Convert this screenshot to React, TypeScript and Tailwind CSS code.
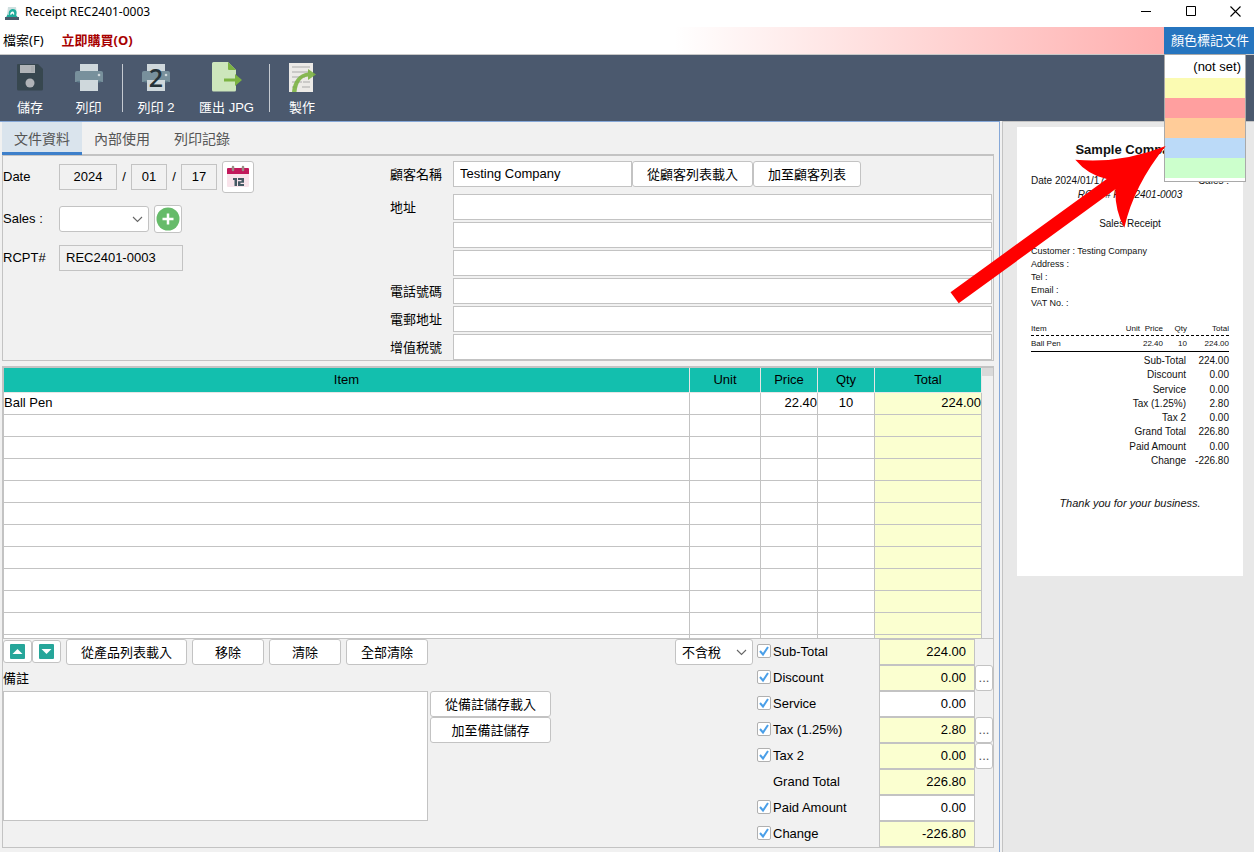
import type { ReactNode } from 'react';
import clsx from 'clsx';

const BORDER = 'border-[#c3c3c3]';

const totals = [
  { label: 'Sub-Total', value: '224.00', check: true, white: false, more: false },
  { label: 'Discount', value: '0.00', check: true, white: false, more: true },
  { label: 'Service', value: '0.00', check: true, white: true, more: false },
  { label: 'Tax (1.25%)', value: '2.80', check: true, white: false, more: true },
  { label: 'Tax 2', value: '0.00', check: true, white: false, more: true },
  { label: 'Grand Total', value: '226.80', check: false, white: false, more: false },
  { label: 'Paid Amount', value: '0.00', check: true, white: true, more: false },
  { label: 'Change', value: '-226.80', check: true, white: false, more: false },
];

const columns = [
  { name: 'Item', width: '' },
  { name: 'Unit', width: 'w-[71px]' },
  { name: 'Price', width: 'w-[57px]' },
  { name: 'Qty', width: 'w-[57px]' },
  { name: 'Total', width: 'w-[107px]' },
];

const rows = [['Ball Pen', '', '22.40', '10', '224.00'], ...Array.from({ length: 11 }, () => ['', '', '', '', ''])];

const colours = [
  { name: 'Yellow', bg: 'bg-[#fbfbb2]' },
  { name: 'Red', bg: 'bg-[#ff9f9f]' },
  { name: 'Orange', bg: 'bg-[#ffcc99]' },
  { name: 'Blue', bg: 'bg-[#bbdaf8]' },
  { name: 'Green', bg: 'bg-[#ccffcc]' },
];

function Button({ children, className, label }: { children: ReactNode; className?: string; label?: string }) {
  return (
    <button
      type="button"
      aria-label={label}
      className={clsx('flex shrink-0 items-center justify-center rounded-[3px] border bg-white', BORDER, className)}
    >
      {children}
    </button>
  );
}

function TextButton({ children, className }: { children: ReactNode; className: string }) {
  return <Button className={clsx('h-[26px] pt-0.5', className)}>{children}</Button>;
}

function Field({ label, value = '', className }: { label: string; value?: string; className?: string }) {
  return (
    <input
      aria-label={label}
      defaultValue={value}
      className={clsx('h-[26px] min-w-0 border pb-0.5 outline-none', BORDER, className)}
    />
  );
}

function Select({ label, options, className }: { label: string; options: string[]; className?: string }) {
  return (
    <div className={clsx('relative h-[26px]', className)}>
      <select
        id={label}
        aria-label={label}
        className={clsx('h-full w-full appearance-none rounded-[3px] border bg-white pt-0.5 pl-1.5 outline-none', BORDER)}
      >
        {options.map((o) => (
          <option key={o}>{o}</option>
        ))}
      </select>
      <svg className="pointer-events-none absolute top-2.5 right-1.5" width="11" height="7" viewBox="0 0 11 7" fill="none">
        <path d="M1 1l4.5 4.5L10 1" stroke="#666" strokeWidth="1.1" />
      </svg>
    </div>
  );
}

function AppIcon() {
  return (
    <svg width="14" height="14" viewBox="0 0 14 14">
      <path d="M3 0h8l1 8H2z" fill="#cfe0e0" />
      <path d="M4 8C3 4.500 5 2 8 2s4.500 3 3 6l2 2.500H1L2.500 7.500z" fill="#1fae9d" />
      <path d="M5 7.500C5.500 5 7 4 8 4.500S9.500 6.500 9 8z" fill="#fff" />
      <path d="M6.500 8a1 1.500 0 0 1 2 0z" fill="#12a594" />
      <path d="M0 10h14v3H0z" fill="#4a5b6c" />
    </svg>
  );
}

function SaveIcon() {
  return (
    <svg width="28" height="28" viewBox="0 0 28 28">
      <path d="M2 1h20l5 5v20a1.500 1.500 0 0 1-1.500 1.500h-23A1.500 1.500 0 0 1 1 26V2a1 1 0 0 1 1-1z" fill="#37474f" />
      <path d="M4 2h15v8H4z" fill="#b0b4b7" />
      <path d="M15 3h3v6h-3z" fill="#a6abae" />
      <circle cx="14" cy="20" r="4.500" fill="#b0b4b7" />
    </svg>
  );
}

function PrinterIcon() {
  return (
    <svg width="30" height="28" viewBox="0 0 30 28">
      <path d="M6 1h18v7H6z" fill="#cfd8dc" />
      <path d="M3 8h24a2 2 0 0 1 2 2v9H1v-9a2 2 0 0 1 2-2z" fill="#78909c" />
      <path d="M2 18h26l-2 1.500H4z" fill="#607d8b" />
      <circle cx="25" cy="12" r="1.300" fill="#cfd8dc" />
      <path d="M6 17h18v11H6z" fill="#cfd8dc" />
    </svg>
  );
}

function ExportIcon() {
  return (
    <svg width="30" height="30" viewBox="0 0 30 30">
      <path d="M1.500 0H16l8 8v20a1.500 1.500 0 0 1-1.500 1.500h-21A1.500 1.500 0 0 1 0 28V1.500A1.500 1.500 0 0 1 1.500 0z" fill="#cde6bc" />
      <path d="M16 0v7a1 1 0 0 0 1 1h7z" fill="#7cb342" />
      <path d="M12 16.500h11V12l7 6-7 6v-4.500H12z" fill="#7cb342" />
    </svg>
  );
}

function MakeIcon() {
  return (
    <svg width="29" height="31" viewBox="0 0 29 31">
      <path d="M1 1h24v29H1z" fill="#eceae7" />
      <path d="M4 5h18M4 10h18M4 15h13M4 20h10M4 25h5M15 20h7M14 25h8" stroke="#a9a9a9" strokeWidth="1.200" />
      <path d="M4 30C5 19 11 11.500 20 10.500V7l8 5.500-8 5.500v-3.500C13 15 9.500 21 8.500 30z" fill="#7cb342" opacity=".9" />
    </svg>
  );
}

function CalendarIcon() {
  return (
    <svg width="24" height="24" viewBox="0 0 24 24">
      <path d="M1 9h22v12a1 1 0 0 1-1 1H2a1 1 0 0 1-1-1z" fill="#f8e3ea" />
      <path d="M2 3h20a1 1 0 0 1 1 1v5H1V4a1 1 0 0 1 1-1z" fill="#c2185b" />
      <path d="M7 2v3M17 2v3" stroke="#9b8f86" strokeWidth="2.500" strokeLinecap="round" />
      <path d="M7 13h4v8H8.500v-6H7zM12 13h6v4.700h-3.500V19H18v2h-6v-4.700h3.500V15H12z" fill="#455a64" />
    </svg>
  );
}

function ToolButton({ icon, children, className }: { icon: ReactNode; children: ReactNode; className: string }) {
  return (
    <button type="button" className={clsx('flex h-[66px] shrink-0 flex-col items-center pt-1.5 text-white', className)}>
      <span className="flex h-8 items-center justify-center">{icon}</span>
      <span className="mt-[7px] h-4 leading-4 whitespace-nowrap">{children}</span>
    </button>
  );
}

function TitleBar() {
  return (
    <header className="flex h-[27px] shrink-0 items-center pl-[5px] font-['Noto_Sans','Open_Sans',sans-serif] text-[12px]">
      <AppIcon />
      <h1 className="ml-1.5 flex-1 pb-1">Receipt REC2401-0003</h1>
      <div className="flex h-full items-center pb-1">
        <button type="button" aria-label="Minimize" className="flex w-[45px] justify-center">
          <svg width="11" height="11" viewBox="0 0 11 11"><path d="M0 5.500h10" stroke="#000" /></svg>
        </button>
        <button type="button" aria-label="Maximize" className="flex w-[45px] justify-center">
          <svg width="11" height="11" viewBox="0 0 11 11"><path d="M.5.500h9v9h-9z" fill="none" stroke="#000" /></svg>
        </button>
        <button type="button" aria-label="Close" className="flex w-10 justify-center pl-0.5">
          <svg width="11" height="11" viewBox="0 0 11 11"><path d="M.5.500l10 10M10.500.500l-10 10" stroke="#000" strokeWidth="1.100" /></svg>
        </button>
      </div>
    </header>
  );
}

function MenuBar() {
  return (
    <nav className="relative flex h-[28px] shrink-0 items-center border-b border-[#c8c8c8] font-['Noto_Sans','Noto_Sans_CJK_TC',sans-serif]">
      <button type="button" className="ml-[3px] pb-0.5 whitespace-nowrap">檔案(F)</button>
      <button type="button" className="ml-[18px] pb-0.5 font-bold whitespace-nowrap text-[#a80000]">立即購買(O)</button>
      <div className="ml-auto h-full w-[490px] bg-linear-to-r from-white to-[#ffafaf]" />
      <button type="button" aria-expanded="true" className="h-full w-[90px] bg-[#2675bf] pb-0.5 pl-0.5 text-center whitespace-nowrap text-white">
        顏色標記文件
      </button>
      <ul className="absolute top-[27px] right-2 z-10 w-[82px] border border-[#a9a9a9] bg-white pb-[3px] font-['Liberation_Sans',sans-serif]">
        <li>
          <button type="button" className="block h-[23px] w-full pr-1 text-right leading-6">(not set)</button>
        </li>
        {colours.map((c) => (
          <li key={c.name}>
            <button type="button" aria-label={c.name} className={clsx('block h-5 w-full', c.bg)} />
          </li>
        ))}
      </ul>
    </nav>
  );
}

function ToolBar() {
  return (
    <div className="flex h-[66px] shrink-0 bg-[#4b596e]">
      <ToolButton className="w-[60px]" icon={<SaveIcon />}>儲存</ToolButton>
      <ToolButton className="w-[57px]" icon={<PrinterIcon />}>列印</ToolButton>
      <span className="mt-[9px] ml-[5px] h-12 w-px bg-[#c5cad1]" />
      <ToolButton
        className="ml-[5px] w-[56px]"
        icon={
          <span className="relative">
            <PrinterIcon />
            <span className="absolute inset-0 text-center font-['Open_Sans',sans-serif] text-[25px] leading-7 font-semibold text-[#263238]">2</span>
          </span>
        }
      >
        列印 2
      </ToolButton>
      <ToolButton className="ml-1 w-[77px]" icon={<ExportIcon />}>匯出 JPG</ToolButton>
      <span className="mt-[9px] ml-1 h-12 w-px bg-[#c5cad1]" />
      <ToolButton className="ml-1 w-[56px]" icon={<MakeIcon />}>製作</ToolButton>
    </div>
  );
}

function Tabs() {
  return (
    <div role="tablist" className="ml-0.5 flex h-8 text-[14px] text-[#555]">
      <button role="tab" aria-selected="true" type="button" className="z-1 -mb-px w-20 border-b-3 border-[#3d7fca] bg-[#dae4ed] pt-[3px]">
        文件資料
      </button>
      <button role="tab" aria-selected="false" type="button" className="w-20 pt-px">內部使用</button>
      <button role="tab" aria-selected="false" type="button" className="w-20 pt-px">列印記錄</button>
    </div>
  );
}

function DocumentForm() {
  return (
    <section className={clsx('mr-[5px] ml-0.5 flex border border-t-2', BORDER)}>
      <div className="w-[387px] shrink-0">
        <div className="mt-[5px] flex items-center">
          <span className="w-14">Date</span>
          <Field label="Year" value="2024" className="w-[58px] text-center" />
          <span className="w-3.5 text-center">/</span>
          <Field label="Month" value="01" className="w-[36px] text-center" />
          <span className="w-3.5 text-center">/</span>
          <Field label="Day" value="17" className="w-[36px] text-center" />
          <Button label="Pick date" className="ml-[5px] h-8 w-8"><CalendarIcon /></Button>
        </div>
        <div className="mt-3 flex items-center">
          <label htmlFor="Sales" className="w-14">Sales :</label>
          <Select label="Sales" options={['']} className="w-[90px]" />
          <Button label="Add sales" className="ml-[5px] h-7 w-7">
            <svg width="24" height="24" viewBox="0 0 24 24">
              <circle cx="12" cy="12" r="11.500" fill="#66bb6a" />
              <path d="M12 6.500v11M6.500 12h11" stroke="#fff" strokeWidth="2.500" />
            </svg>
          </Button>
        </div>
        <div className="mt-3 flex items-center">
          <span className="w-14">RCPT#</span>
          <Field label="RCPT#" value="REC2401-0003" className="w-[124px] px-1.5" />
        </div>
      </div>
      <div className="mt-[5px] mr-px grid flex-1 grid-cols-[63px_1fr] items-center gap-y-0.5">
        <span className="mb-1">顧客名稱</span>
        <div className="mb-[5px] flex">
          <Field label="顧客名稱" value="Testing Company" className="w-[179px] bg-white px-1.5" />
          <TextButton className="w-[121px]">從顧客列表載入</TextButton>
          <TextButton className="w-[108px]">加至顧客列表</TextButton>
        </div>
        <span className="pt-0.5">地址</span>
        <Field label="地址" className="bg-white px-1.5" />
        <Field label="地址 2" className="col-start-2 bg-white px-1.5" />
        <Field label="地址 3" className="col-start-2 bg-white px-1.5" />
        <span className="pt-0.5">電話號碼</span>
        <Field label="電話號碼" className="bg-white px-1.5" />
        <span className="pt-0.5">電郵地址</span>
        <Field label="電郵地址" className="bg-white px-1.5" />
        <span className="pt-0.5">增值税號</span>
        <Field label="增值税號" className="bg-white px-1.5" />
      </div>
    </section>
  );
}

function ItemGrid() {
  return (
    <section className={clsx('mt-[5px] mr-[5px] ml-0.5 flex min-h-0 flex-1 overflow-hidden border border-t-2 border-l-2', BORDER)}>
      <div className="min-w-0 flex-1">
        <table className="w-full table-fixed border-separate border-spacing-0">
          <thead>
            <tr className="h-[25px] bg-[#13bfae]">
              {columns.map((c) => (
                <th key={c.name} className={clsx('border-r border-b border-[#e6e6e6] p-0 font-normal', c.width)}>
                  {c.name}
                </th>
              ))}
            </tr>
          </thead>
          <tbody>
            {rows.map((row, i) => (
              <tr key={i} className="h-[22px]">
                {row.map((cell, j) => (
                  <td
                    key={j}
                    className={clsx(
                      'border-r border-b p-0 pb-0.5',
                      BORDER,
                      j === 4 ? 'bg-[#fbffd0]' : 'bg-white',
                      j === 3 && 'text-center',
                      (j === 2 || j === 4) && 'text-right',
                    )}
                  >
                    {cell}
                  </td>
                ))}
              </tr>
            ))}
          </tbody>
        </table>
      </div>
      <div className="w-[11px]">
        <div className="h-2 bg-[#d9d9d9]" />
      </div>
    </section>
  );
}

function Totals() {
  return (
    <div className="flex flex-col">
      {totals.map((t) => (
        <div key={t.label} className="flex h-[26px] items-center">
          <div className="w-4 pb-0.5">
            {t.check && (
              <span className="relative block h-3.5 w-3.5">
                <input
                  type="checkbox"
                  id={t.label}
                  defaultChecked
                  className="peer absolute inset-0 appearance-none rounded-[2px] border border-[#b0b0b0] bg-white"
                />
                <svg className="pointer-events-none invisible absolute inset-0 peer-checked:visible" width="14" height="14" viewBox="0 0 14 14" fill="none">
                  <path d="M3 7l3 3.500L11 3" stroke="#4a9fe8" strokeWidth="2" />
                </svg>
              </span>
            )}
          </div>
          <label htmlFor={t.check ? t.label : 'Grand Total value'} className="w-[106px] pb-px">{t.label}</label>
          <input
            id={`${t.label} value`}
            aria-label={t.label}
            defaultValue={t.value}
            className={clsx(
              'h-[26px] w-24 border pr-2 pb-0.5 text-right outline-none',
              BORDER,
              t.white ? 'bg-white' : 'bg-[#fbffd0]',
            )}
          />
          <div className="w-[18px]">
            {t.more && <Button label={`${t.label} options`} className="h-[26px] w-full text-[#555]">...</Button>}
          </div>
        </div>
      ))}
    </div>
  );
}

function Footer() {
  return (
    <section className={clsx('mr-[5px] mb-1 ml-0.5 flex border border-t-0', BORDER)}>
      <div className="flex-1">
        <div className="flex">
          <Button label="Move up" className="mt-px h-[23px] w-[29px]">
            <svg width="15" height="15" viewBox="0 0 15 15">
              <rect width="15" height="15" rx="1" fill="#26a69a" />
              <path d="M2.500 10l5-5 5 5z" fill="#fff" />
            </svg>
          </Button>
          <Button label="Move down" className="mt-px h-[23px] w-[29px]">
            <svg width="15" height="15" viewBox="0 0 15 15">
              <rect width="15" height="15" rx="1" fill="#26a69a" />
              <path d="M2.500 5l5 5 5-5z" fill="#fff" />
            </svg>
          </Button>
          <div className="ml-[5px] flex gap-[5px]">
            <TextButton className="w-[121px]">從產品列表載入</TextButton>
            <TextButton className="w-[72px]">移除</TextButton>
            <TextButton className="w-[72px]">清除</TextButton>
            <TextButton className="w-[82px]">全部清除</TextButton>
          </div>
        </div>
        <label htmlFor="remarks" className="block h-[26px] leading-7">備註</label>
        <div className="flex items-start gap-0.5">
          <textarea id="remarks" className={clsx('h-[130px] w-[425px] resize-none border bg-white outline-none', BORDER)} />
          <div>
            <TextButton className="w-[121px]">從備註儲存載入</TextButton>
            <TextButton className="w-[121px]">加至備註儲存</TextButton>
          </div>
        </div>
      </div>
      <Select label="Tax mode" options={['不含稅']} className="mr-1 w-[78px]" />
      <Totals />
    </section>
  );
}

function ReceiptPreview() {
  return (
    <aside className="w-[252px] shrink-0 border-t border-l border-[#c3c3c3] bg-[#e8e8e8] pt-[5px] pr-[11px] pl-3.5">
      <article className="bg-white px-3.5 pt-3.5 pb-[66px] text-[10px] leading-[14px] text-[#111]">
        <h2 className="text-center text-[13px] leading-[18px] font-bold">Sample Company</h2>
        <div className="mt-[15px] flex justify-between">
          <span>Date 2024/01/17</span>
          <span>Sales :</span>
        </div>
        <p className="text-center italic">RCPT# REC2401-0003</p>
        <p className="mt-[15px] text-center">Sales Receipt</p>
        <div className="mt-3.5 text-[9px] leading-[13px]">
          <p>Customer : Testing Company</p>
          <p>Address :</p>
          <p>Tel :</p>
          <p>Email :</p>
          <p>VAT No. :</p>
        </div>
        <table className="mt-[11px] w-full table-fixed border-collapse text-[8px]">
          <thead>
            <tr className="h-[15px] bg-[repeating-linear-gradient(90deg,#000_0_3px,transparent_3px_5px)] bg-[length:100%_1px] bg-bottom bg-no-repeat">
              <th className="p-0 text-left font-normal">Item</th>
              <th className="w-5 p-0 text-right font-normal">Unit</th>
              <th className="w-[23px] p-0 text-right font-normal">Price</th>
              <th className="w-6 p-0 text-right font-normal">Qty</th>
              <th className="w-[42px] p-0 text-right font-normal">Total</th>
            </tr>
          </thead>
          <tbody>
            <tr className="h-[15px] border-b border-black">
              <td className="p-0 pt-px">Ball Pen</td>
              <td className="p-0 pt-px text-right" colSpan={2}>22.40</td>
              <td className="p-0 pt-px text-right">10</td>
              <td className="p-0 pt-px text-right">224.00</td>
            </tr>
          </tbody>
        </table>
        <dl className="mt-0.5 flex h-[114px] flex-col justify-between">
          {totals.map((t) => (
            <div key={t.label} className="flex text-right">
              <dt className="flex-1">{t.label}</dt>
              <dd className="w-[43px]">{t.value}</dd>
            </div>
          ))}
        </dl>
        <p className="mt-7 text-center text-[11px] italic">Thank you for your business.</p>
      </article>
    </aside>
  );
}

function Arrow() {
  return (
    <svg className="pointer-events-none absolute top-[145px] right-[88px] z-20" width="216" height="160" viewBox="950 145 216 160">
      <path
        d="M950.500 292.300L1106.700 179Q1088 175 1075.300 159.700Q1121 164 1165.700 146Q1134 185 1124.300 227.700Q1115 211 1115.300 189.300L958.700 303.300z"
        fill="#f00"
      />
    </svg>
  );
}

export default function App() {
  return (
    <div className="relative flex h-screen min-h-[700px] flex-col bg-white font-['Liberation_Sans','Noto_Sans_CJK_TC',sans-serif] text-[13px] leading-4 text-black">
      <TitleBar />
      <MenuBar />
      <ToolBar />
      <div className="flex min-h-0 flex-1">
        <main className="flex min-w-0 flex-1 flex-col border-t border-r border-[#86a8d8] bg-[#f1f1f1]">
          <Tabs />
          <DocumentForm />
          <ItemGrid />
          <Footer />
        </main>
        <div className="w-0.5 bg-[#f1f1f1]" />
        <ReceiptPreview />
      </div>
      <Arrow />
    </div>
  );
}
